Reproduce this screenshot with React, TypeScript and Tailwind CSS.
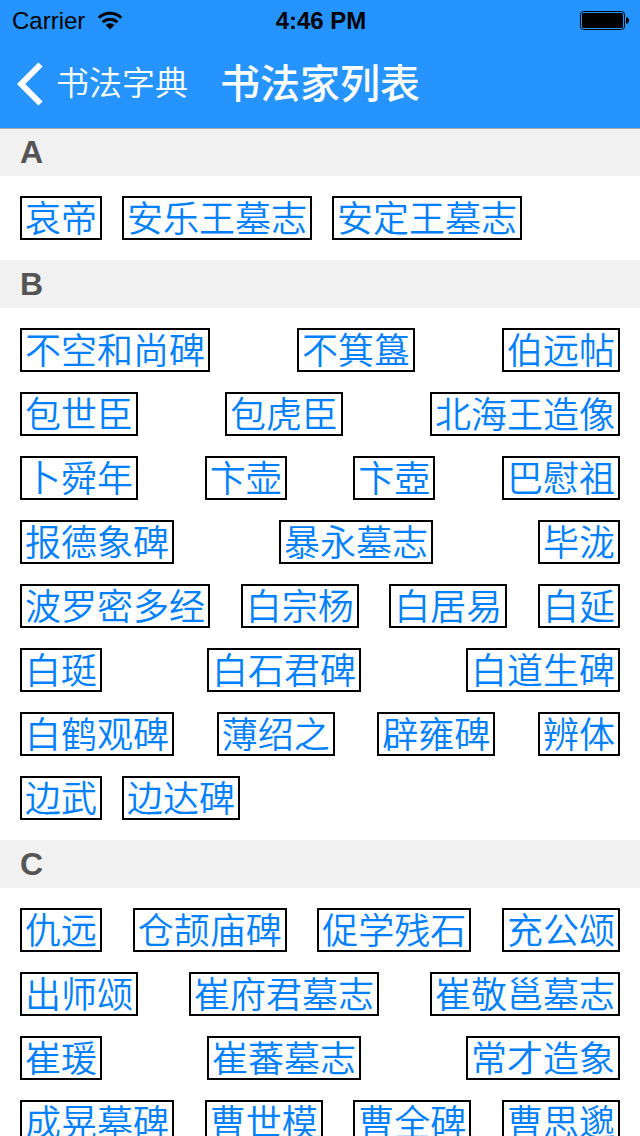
type Section = {
  letter: string;
  names: string[];
  // True while further entries follow the ones loaded so far.
  more?: boolean;
};

const sections: Section[] = [
  { letter: "A", names: ["哀帝", "安乐王墓志", "安定王墓志"] },
  {
    letter: "B",
    names: [
      "不空和尚碑", "不箕簋", "伯远帖",
      "包世臣", "包虎臣", "北海王造像",
      "卜舜年", "卞壶", "卞壺", "巴慰祖",
      "报德象碑", "暴永墓志", "毕泷",
      "波罗密多经", "白宗杨", "白居易", "白延",
      "白珽", "白石君碑", "白道生碑",
      "白鹤观碑", "薄绍之", "辟雍碑", "辨体",
      "边武", "边达碑",
    ],
  },
  {
    letter: "C",
    more: true,
    names: [
      "仇远", "仓颉庙碑", "促学残石", "充公颂",
      "出师颂", "崔府君墓志", "崔敬邕墓志",
      "崔瑗", "崔蕃墓志", "常才造象",
      "成晃墓碑", "曹世模", "曹全碑", "曹思邈",
    ],
  },
];

function WifiIcon() {
  return (
    <svg width="26" height="20" viewBox="0 0 26 20" aria-hidden="true">
      <g fill="none" stroke="#000" strokeWidth="3">
        <path d="M1.800 6.700A16 16 0 0 1 24.200 6.700" />
        <path d="M5.700 11.300A10.300 10.300 0 0 1 20.300 11.300" />
      </g>
      <path d="M13 18.500l-4.400-4.400a6.200 6.200 0 0 1 8.800 0z" fill="#000" />
    </svg>
  );
}

function BatteryIcon() {
  return (
    <svg width="50" height="20" viewBox="0 0 50 20" aria-hidden="true">
      <rect x="0.5" y="0.5" width="44" height="18" rx="3" fill="none" stroke="#000" />
      <rect x="2" y="2" width="41" height="15" rx="1.5" fill="#000" />
      <path d="M46 6.2c1.800.2 3 1.600 3 3.300s-1.200 3.100-3 3.300z" fill="#000" />
    </svg>
  );
}

function StatusBar() {
  return (
    <div className="grid h-10 grid-cols-3 items-center pt-0.5 pr-2.5 pl-3 text-2xl text-black">
      <div className="flex items-center gap-3">
        <span>Carrier</span>
        <WifiIcon />
      </div>
      <span className="text-center font-bold">4:46 PM</span>
      <div className="flex justify-end">
        <BatteryIcon />
      </div>
    </div>
  );
}

function NavBar() {
  return (
    <nav className="flex h-[88px] items-center gap-8 pl-4 text-white">
      <button type="button" className="flex items-center gap-3 text-[33px] leading-[50px] font-[350]">
        <svg width="28" height="44" viewBox="0 0 28 44" aria-hidden="true">
          <path d="M24.500 2.500L5.200 22l19.300 19.500" fill="none" stroke="#fff" strokeWidth="6" />
        </svg>
        书法字典
      </button>
      <h1 className="text-[40px] leading-[48px] font-[500]">书法家列表</h1>
    </nav>
  );
}

function NameSection({ letter, names, more }: Section) {
  return (
    <section>
      <h2 className="h-12 bg-[#f1f1f1] px-5 text-[32px] leading-[48px] font-bold text-[#555]">{letter}</h2>
      <ul className="flex flex-wrap justify-between gap-5 p-5">
        {names.map((name) => (
          <li key={name}>
            <button
              type="button"
              className="block h-11 border-2 border-black px-[3px] text-4xl leading-[44px] font-[350] whitespace-nowrap text-[#0080ff]"
            >
              {name}
            </button>
          </li>
        ))}
        {!more && <li className="grow" aria-hidden="true" />}
      </ul>
    </section>
  );
}

export default function App() {
  return (
    <div
      lang="zh-CN"
      className="flex h-screen flex-col bg-white font-['Liberation_Sans','Noto_Sans_CJK_SC',sans-serif]"
    >
      <header className="z-10 shrink-0 bg-[#2694ff] shadow-[0_1px_0_#a8aaad]">
        <StatusBar />
        <NavBar />
      </header>
      <main className="min-h-0 flex-1 overflow-y-auto [scrollbar-width:none]">
        {sections.map((section) => (
          <NameSection key={section.letter} {...section} />
        ))}
      </main>
    </div>
  );
}
